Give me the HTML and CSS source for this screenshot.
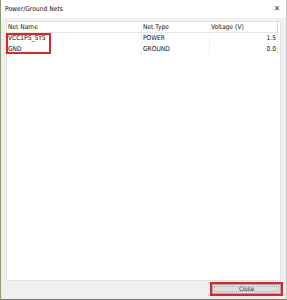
FILE: index.html
```html
<!DOCTYPE html>
<html lang="en">
<head>
  <meta charset="UTF-8" />
  <title>Power/Ground Nets</title>
  <link rel="stylesheet" href="styles.css">
</head>
<body>
  <div class="ventana">
    <div class="titulo">
      <span>Power/Ground Nets</span>
      <span class="cerrar">&#x2715;</span>
    </div>
    <div class="cuerpo">
      <div class="lista">
        <div class="fila cabecera">
          <div class="col nombre">Net Name</div>
          <div class="col tipo">Net Type</div>
          <div class="col voltaje">Voltage (V)</div>
        </div>
        <div class="marcado">
          <div class="fila">
            <div class="col nombre">VCC1PS_SYS</div>
            <div class="col tipo">POWER</div>
            <div class="col voltaje num">1.5</div>
          </div>
          <div class="fila">
            <div class="col nombre">GND</div>
            <div class="col tipo">GROUND</div>
            <div class="col voltaje num">0.0</div>
          </div>
          <div class="caja-roja"></div>
        </div>
      </div>
      <div class="pie">
        <div class="marco-rojo">
          <button class="boton">Close</button>
        </div>
      </div>
    </div>
  </div>
</body>
</html>
```

FILE: styles.css
```css
body {
  margin: 0;
  font-family: "DejaVu Sans Condensed", "DejaVu Sans", sans-serif;
  font-stretch: condensed;
  font-size: 6.6px;
  color: #111;
  background: #fff;
}

.ventana {
  width: 285px;
  height: 299px;
  border-left: 1px solid #8e9c72;
  border-right: 1px solid #c8c8c8;
  border-bottom: 1px solid #7a7a7a;
  background: #f0f0f0;
  display: flex;
  flex-direction: column;
}

.titulo {
  height: 18px;
  background: #fff;
  display: flex;
  justify-content: space-between;
  align-items: center;
  padding: 0 5px 0 4px;
  box-sizing: border-box;
  font-size: 6.7px;
}

.cerrar {
  font-family: "DejaVu Sans", sans-serif;
  font-size: 8px;
  color: #333;
  margin-right: 1px;
  margin-top: -2px;
}

.cuerpo {
  flex: 1;
  padding: 3px 5px 3px 5px;
  display: flex;
  flex-direction: column;
}

.lista {
  flex: 1;
  background: #fff;
  border: 1px solid #e4e4e4;
  padding-right: 2px;
}

.fila {
  display: flex;
  height: 11px;
  align-items: center;
}

.cabecera {
  height: 10px;
  border-bottom: 1px solid #e5e5e5;
  border-right: 1px solid #d8d8d8;
}

.cabecera .col {
  border-right: 1px solid #e5e5e5;
  height: 10px;
  line-height: 10px;
}

.col {
  padding-left: 1px;
  box-sizing: border-box;
}

.nombre {
  width: 135px;
}

.tipo {
  width: 68px;
}

.voltaje {
  flex: 1;
}

.num {
  text-align: right;
  padding-right: 1px;
}

.fila .col {
  border-right: 1px solid #f0f0f0;
  height: 11px;
  line-height: 11px;
}

.cabecera .col.voltaje {
  border-right: none;
}

.marcado {
  position: relative;
}

.caja-roja {
  position: absolute;
  left: -1px;
  top: 0;
  width: 45px;
  height: 21px;
  box-sizing: border-box;
  border: 2px solid #e0242c;
}

.pie {
  display: flex;
  justify-content: flex-end;
  padding-top: 1px;
}

.marco-rojo {
  border: 2px solid #e0242c;
  width: 73px;
  height: 14px;
  box-sizing: border-box;
  margin-right: -2px;
}

.boton {
  display: block;
  width: 100%;
  height: 10px;
  padding: 0;
  font-family: "DejaVu Sans Condensed", "DejaVu Sans", sans-serif;
  font-stretch: condensed;
  font-size: 6.2px;
  line-height: 8px;
  color: #333;
  background: #e1e1e1;
  border: 1px solid #a8a8a8;
  outline: 1px dotted #aaa;
  outline-offset: -3px;
}
```
